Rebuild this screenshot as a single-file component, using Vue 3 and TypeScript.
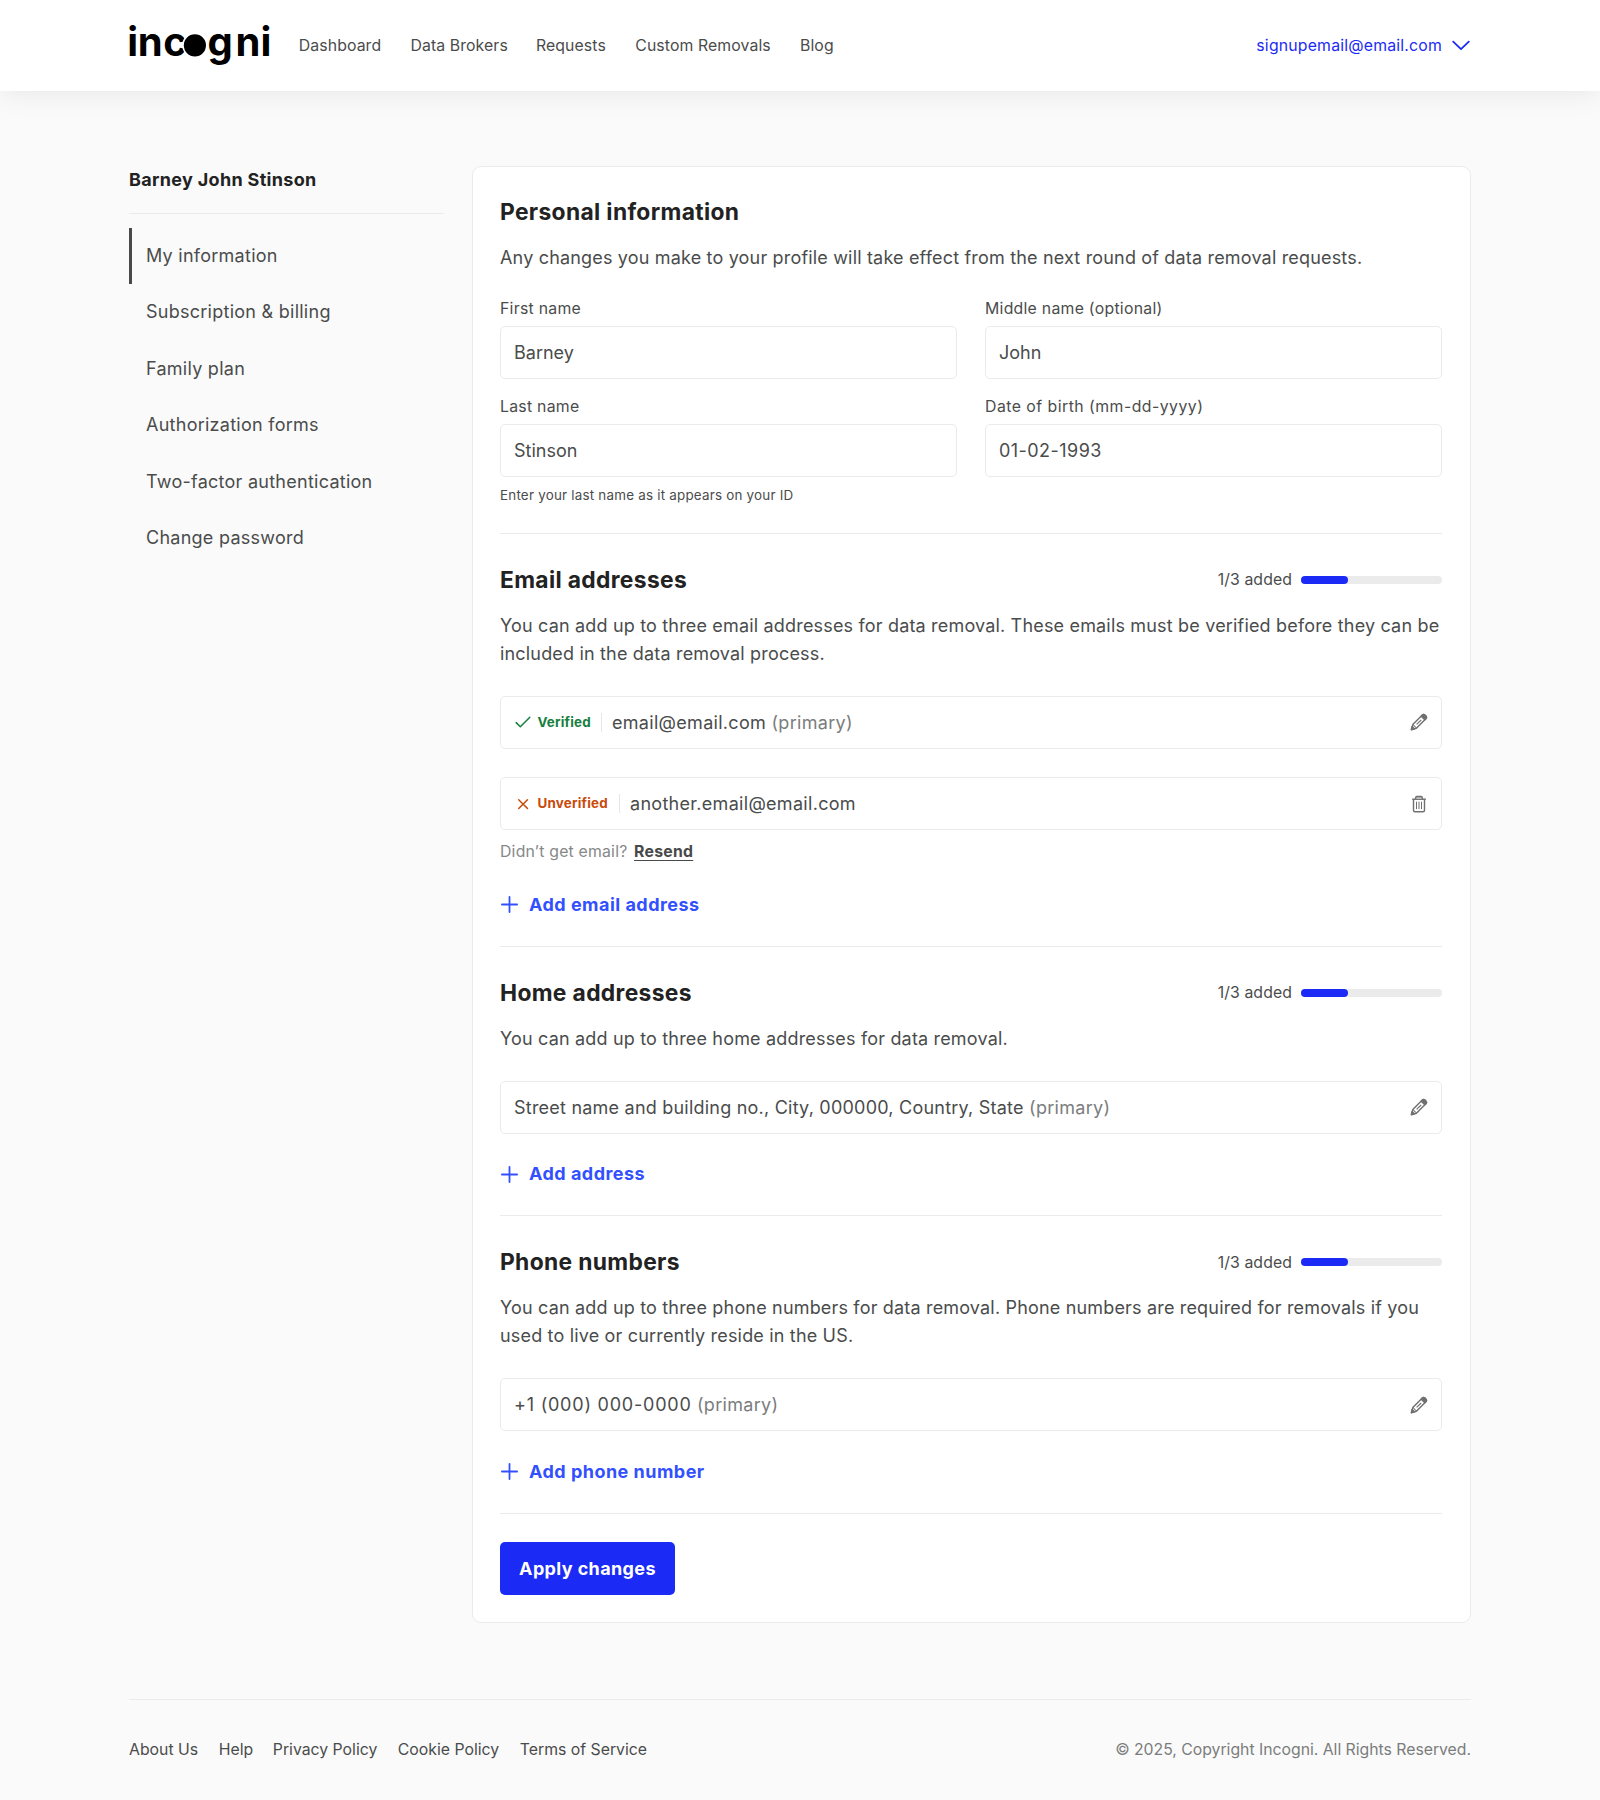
<script setup lang="ts">
interface Entry {
  text: string
  primary?: boolean
  status?: 'verified' | 'unverified'
  action: 'edit' | 'delete'
}

interface Section {
  id: string
  title: string
  description: string[]
  entries: Entry[]
  resend?: boolean
  addLabel: string
}

const nav = ['Dashboard', 'Data Brokers', 'Requests', 'Custom Removals', 'Blog']

const menu = [
  'My information',
  'Subscription & billing',
  'Family plan',
  'Authorization forms',
  'Two-factor authentication',
  'Change password',
]

const fields = [
  { id: 'first', label: 'First name', value: 'Barney' },
  { id: 'middle', label: 'Middle name (optional)', value: 'John' },
  { id: 'last', label: 'Last name', value: 'Stinson', hint: 'Enter your last name as it appears on your ID' },
  { id: 'dob', label: 'Date of birth (mm-dd-yyyy)', value: '01-02-1993' },
]

const sections: Section[] = [
  {
    id: 'email',
    title: 'Email addresses',
    description: [
      'You can add up to three email addresses for data removal. These emails must be verified before they can be',
      'included in the data removal process.',
    ],
    entries: [
      { text: 'email@email.com', primary: true, status: 'verified', action: 'edit' },
      { text: 'another.email@email.com', status: 'unverified', action: 'delete' },
    ],
    resend: true,
    addLabel: 'Add email address',
  },
  {
    id: 'home',
    title: 'Home addresses',
    description: ['You can add up to three home addresses for data removal.'],
    entries: [
      { text: 'Street name and building no., City, 000000, Country, State', primary: true, action: 'edit' },
    ],
    addLabel: 'Add address',
  },
  {
    id: 'phone',
    title: 'Phone numbers',
    description: [
      'You can add up to three phone numbers for data removal. Phone numbers are required for removals if you',
      'used to live or currently reside in the US.',
    ],
    entries: [{ text: '+1 (000) 000-0000', primary: true, action: 'edit' }],
    addLabel: 'Add phone number',
  },
]

const footerLinks = ['About Us', 'Help', 'Privacy Policy', 'Cookie Policy', 'Terms of Service']
</script>

<template>
  <div class="page">
    <header class="topbar">
      <div class="wrap topbar-inner">
        <svg class="logo" width="142" height="44" viewBox="0 0 142 44" aria-label="incogni">
          <g class="wordmark">
            <text x="-1.8 8.8 34.3" y="33">inc</text>
            <text x="78.4 106.4 131.4" y="33">gni</text>
          </g>
          <circle cx="65.9" cy="22.3" r="11.9" fill="#000" stroke="#fff" stroke-width="1.6" />
        </svg>
        <nav class="nav">
          <a v-for="item in nav" :key="item">{{ item }}</a>
        </nav>
        <div class="account">
          <span>signupemail@email.com</span>
          <svg width="18" height="11" viewBox="0 0 18 11" fill="none" stroke="#1b2bf5" stroke-width="1.8">
            <path d="M1.2 1.6 9 9.2l7.8-7.6" stroke-linecap="round" stroke-linejoin="round" />
          </svg>
        </div>
      </div>
    </header>

    <div class="wrap body">
      <aside class="sidebar">
        <div class="person">Barney John Stinson</div>
        <ul class="menu">
          <li v-for="(item, i) in menu" :key="item" :class="{ active: i === 0 }">{{ item }}</li>
        </ul>
      </aside>

      <main class="card">
        <section>
          <h2>Personal information</h2>
          <p class="desc intro">
            Any changes you make to your profile will take effect from the next round of data removal requests.
          </p>
          <div class="fields">
            <div v-for="f in fields" :key="f.id" class="field" :class="f.id">
              <label>{{ f.label }}</label>
              <div class="box">{{ f.value }}</div>
              <div v-if="f.hint" class="hint">{{ f.hint }}</div>
            </div>
          </div>
        </section>

        <section v-for="s in sections" :key="s.id" class="divided">
          <div class="head">
            <h2>{{ s.title }}</h2>
            <div class="progress">
              <span>1/3 added</span>
              <div class="track"><div class="fill"></div></div>
            </div>
          </div>
          <p class="desc"><span v-for="line in s.description" :key="line">{{ line }}</span></p>
          <div class="entries">
            <div v-for="e in s.entries" :key="e.text" class="box entry">
              <div v-if="e.status" class="status" :class="e.status">
                <svg v-if="e.status === 'verified'" width="16" height="16" viewBox="0 0 16 16" fill="none" stroke="currentColor" stroke-width="1.5">
                  <path d="M1.2 8.6l4.1 4.1L14.8 3.2" stroke-linecap="round" stroke-linejoin="round" />
                </svg>
                <svg v-else width="16" height="16" viewBox="0 0 16 16" fill="none" stroke="currentColor" stroke-width="1.5">
                  <path d="M3.7 3.7l8.8 8.8M12.5 3.7l-8.8 8.8" stroke-linecap="round" />
                </svg>
                <b>{{ e.status === 'verified' ? 'Verified' : 'Unverified' }}</b>
              </div>
              <span class="value" :class="s.id">{{ e.text }}</span>
              <span v-if="e.primary" class="muted"> (primary)</span>
              <svg v-if="e.action === 'edit'" class="action" width="18" height="18" viewBox="0 0 18 18" fill="none" stroke="#707070" stroke-width="1.4" stroke-linejoin="round">
                <path d="M1.5 16.5l1.3-4.9L12.3 2.1q1.3-1.2 2.6 0l1 1q1.2 1.3 0 2.6L6.4 15.2z" />
                <path d="M11.2 3.2l3.6 3.6 1.2-1.2q1.1-1.2 0-2.4l-1.2-1.2q-1.2-1-2.4 0z" fill="#707070" />
                <path d="M1.3 16.7l.8-3.2 2.4 2.4z" fill="#707070" />
                <path d="M2.9 11.7l1 .3.5 1.6 1.6.5.4 1" stroke-width="1" />
                <path d="M6.6 11.4l4.6-4.4" stroke-width="1.1" />
              </svg>
              <svg v-else class="action" width="18" height="18" viewBox="0 0 18 18" fill="none" stroke="#707070">
                <path d="M2.2 4.2h13.6" stroke-width="1.5" />
                <path d="M5.7 4V2.6q0-1.1 1.1-1.1h4.4q1.1 0 1.1 1.1V4" stroke-width="1.3" fill="#bdbdbd" />
                <path d="M3.5 4.4v10.8q0 1.5 1.5 1.5h8q1.5 0 1.5-1.5V4.4" stroke-width="1.4" />
                <path d="M6.5 6.7v7.4M9 6.7v7.4M11.5 6.7v7.4" stroke-width="1" />
              </svg>
            </div>
          </div>
          <div v-if="s.resend" class="resend">Didn’t get email? <a>Resend</a></div>
          <a class="add">
            <svg width="17" height="17" viewBox="0 0 17 17" stroke="currentColor" stroke-width="1.8" stroke-linecap="round">
              <path d="M8.5 .9v15.2M.9 8.5h15.2" />
            </svg>
            <span>{{ s.addLabel }}</span>
          </a>
        </section>

        <section class="divided submit">
          <button type="button">Apply changes</button>
        </section>
      </main>
    </div>

    <footer class="wrap footer">
      <nav class="links">
        <a v-for="l in footerLinks" :key="l">{{ l }}</a>
      </nav>
      <span class="copy">© 2025, Copyright Incogni. All Rights Reserved.</span>
    </footer>
  </div>
</template>

<style>
html,
body {
  margin: 0;
  background: #fafafa;
}
</style>

<style scoped>
.page {
  box-sizing: border-box;
  min-height: 1800px;
  background: #fafafa;
  color: #4a4c4c;
  font-family: Inter, 'Liberation Sans', sans-serif;
  font-size: 18px;
  line-height: 28.2px;
}
.page * {
  box-sizing: border-box;
}
.wrap {
  width: 1342px;
  margin: 0 auto;
}
.topbar {
  height: 91px;
  background: #fff;
  box-shadow: 0 0 28px rgba(0, 0, 0, 0.09);
}
.topbar-inner {
  display: flex;
  align-items: center;
  height: 91px;
}
.logo {
  flex: none;
  margin-bottom: 1px;
  overflow: visible;
}
.wordmark {
  font-family: Inter, sans-serif;
  font-size: 40px;
  font-weight: 700;
  fill: #000;
}
.nav {
  display: grid;
  grid-template-columns: 111.7px 125.5px 99.3px 164.7px auto;
  margin-left: 27.8px;
  padding-top: 1px;
  font-size: 15.8px;
  letter-spacing: 0.1px;
}
.account {
  display: flex;
  align-items: center;
  gap: 10px;
  margin-left: auto;
  padding: 0 1px 0 0;
  color: #1b2bf5;
  font-size: 15.8px;
  letter-spacing: 0.2px;
}
.account span {
  padding-top: 1px;
}
.body {
  display: flex;
  align-items: flex-start;
  gap: 28px;
  padding-top: 75px;
}
.sidebar {
  width: 315px;
}
.person {
  height: 48px;
  border-bottom: 1px solid #ebebeb;
  color: #222;
  font-weight: 700;
  letter-spacing: 0.32px;
}
.menu {
  margin: 14px 0 0;
  padding: 0;
  list-style: none;
}
.menu li {
  height: 56.4px;
  padding-left: 14px;
  border-left: 3px solid transparent;
  line-height: 56.6px;
  letter-spacing: 0.26px;
}
.menu li.active {
  border-color: #484a4a;
}
.card {
  width: 999px;
  height: 1457px;
  padding: 26px 28px 0 27px;
  border: 1px solid #ebebeb;
  border-radius: 9px;
  background: #fff;
}
h2 {
  margin: 0;
  color: #222;
  font-size: 22.8px;
  font-weight: 700;
  line-height: 37.6px;
  letter-spacing: 0.35px;
}
.desc {
  margin: 13px 0 0;
  white-space: nowrap;
  letter-spacing: 0.175px;
}
.desc span {
  display: block;
}
.fields {
  display: grid;
  grid-template-columns: 457px 457px;
  column-gap: 28px;
  row-gap: 15px;
  margin-top: 24px;
  height: 236.8px;
  align-content: start;
}
.field label {
  display: block;
  height: 30px;
  font-size: 15.8px;
  line-height: 25px;
  letter-spacing: 0.27px;
}
.field.dob label {
  letter-spacing: 0.48px;
}
.field.dob .box {
  letter-spacing: 0.45px;
}
.box {
  height: 53px;
  padding: 0 13px;
  border: 1px solid #ebebeb;
  border-radius: 5px;
  background: #fff;
  line-height: 51px;
}
.hint {
  margin-top: 8px;
  font-size: 13.4px;
  line-height: 20px;
  letter-spacing: 0.22px;
}
.divided {
  padding-top: 27.4px;
  border-top: 1px solid #ebebeb;
}
.head {
  display: flex;
  justify-content: space-between;
  align-items: center;
}
.progress {
  display: flex;
  align-items: center;
  gap: 9px;
  font-size: 15.8px;
  letter-spacing: 0.1px;
}
.progress span {
  padding-top: 1px;
}
.track {
  width: 141px;
  height: 8px;
  border-radius: 4px;
  background: #ebebeb;
}
.fill {
  width: 47px;
  height: 8px;
  border-radius: 4px;
  background: #1b2bf5;
}
.entries {
  display: grid;
  gap: 28.4px;
  margin-top: 27.8px;
}
.entry {
  display: flex;
  align-items: center;
  white-space: pre;
  letter-spacing: 0.3px;
}
.value.home {
  letter-spacing: 0.22px;
}
.value.phone {
  letter-spacing: 0.78px;
}
.status {
  display: flex;
  align-items: center;
  gap: 6px;
  height: 19px;
  margin-right: 10px;
  padding: 0 10px 0 1.4px;
  border-right: 1px solid #e6e6e6;
  font-size: 13.4px;
  line-height: 19px;
  letter-spacing: 0.22px;
}
.status b {
  font-weight: 700;
}
.verified {
  width: 88px;
  color: #15803d;
}
.unverified {
  width: 106px;
  color: #c94a0a;
}
.muted {
  color: #7b7d7d;
}
.action {
  margin-left: auto;
}
.resend {
  margin-top: 10px;
  color: #868888;
  font-size: 15.8px;
  line-height: 24px;
  letter-spacing: 0.2px;
}
.resend a {
  margin-left: 2px;
  color: #484a4a;
  font-weight: 700;
  letter-spacing: 0.25px;
  text-decoration: underline;
  text-underline-offset: 3px;
  text-decoration-thickness: 1px;
}
.add {
  display: flex;
  align-items: center;
  gap: 11px;
  height: 81.4px;
  padding-left: 1px;
  color: #3350ff;
  font-weight: 700;
  letter-spacing: 0.48px;
}
.submit button {
  display: block;
  width: 175px;
  height: 53px;
  margin: 1px 0 0;
  padding: 0;
  border: 0;
  border-radius: 5px;
  background: #1b2bf5;
  color: #fff;
  font: 700 18px/53px Inter, sans-serif;
  letter-spacing: 0.38px;
}
.footer {
  display: flex;
  align-items: center;
  justify-content: space-between;
  height: 101px;
  margin-top: 76px;
  border-top: 1px solid #ebebeb;
  font-size: 15.8px;
}
.links {
  display: grid;
  grid-template-columns: 89.8px 54px 125px 122px auto;
}
.copy {
  color: #7b7d7d;
  letter-spacing: -0.02px;
}
</style>
